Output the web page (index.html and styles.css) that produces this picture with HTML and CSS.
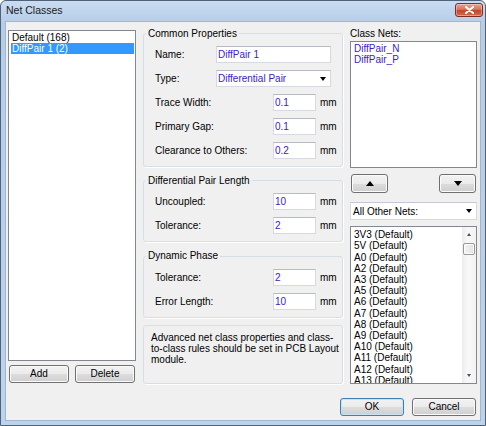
FILE: index.html
```html
<!DOCTYPE html>
<html>
<head>
<meta charset="utf-8">
<title>Net Classes</title>
<link rel="stylesheet" href="styles.css">
</head>
<body>
<div class="window">
  <div class="titlebar">
    <span class="title">Net Classes</span>
    <div class="close"><svg width="11" height="8" viewBox="0 0 11 8"><path d="M2 1 L9 7 M9 1 L2 7" stroke="#fff" stroke-width="2" stroke-linecap="round"/></svg></div>
  </div>
  <div class="client">
    <div class="main">
      <div class="col-left">
        <div class="listbox classes">
          <div class="item">Default (168)</div>
          <div class="item selected">DiffPair 1 (2)</div>
        </div>
        <div class="btn-row">
          <button class="btn">Add</button>
          <button class="btn">Delete</button>
        </div>
      </div>

      <div class="col-mid">
        <fieldset class="group">
          <legend>Common Properties</legend>
          <div class="rows">
            <div class="row"><span class="label short">Name:</span><input class="field wide" value="DiffPair 1"></div>
            <div class="row"><span class="label short">Type:</span><div class="field wide combo"><span>Differential Pair</span><i class="arrow-down"></i></div></div>
            <div class="row"><span class="label">Trace Width:</span><input class="field num" value="0.1"><span class="unit">mm</span></div>
            <div class="row"><span class="label">Primary Gap:</span><input class="field num" value="0.1"><span class="unit">mm</span></div>
            <div class="row"><span class="label">Clearance to Others:</span><input class="field num" value="0.2"><span class="unit">mm</span></div>
          </div>
        </fieldset>
        <fieldset class="group spaced">
          <legend>Differential Pair Length</legend>
          <div class="rows">
            <div class="row"><span class="label">Uncoupled:</span><input class="field num" value="10"><span class="unit">mm</span></div>
            <div class="row"><span class="label">Tolerance:</span><input class="field num" value="2"><span class="unit">mm</span></div>
          </div>
        </fieldset>
        <fieldset class="group spaced">
          <legend>Dynamic Phase</legend>
          <div class="rows">
            <div class="row"><span class="label">Tolerance:</span><input class="field num" value="2"><span class="unit">mm</span></div>
            <div class="row"><span class="label">Error Length:</span><input class="field num" value="10"><span class="unit">mm</span></div>
          </div>
        </fieldset>
        <div class="info">Advanced net class properties and class-<br>to-class rules should be set in PCB Layout<br>module.</div>
      </div>

      <div class="col-right">
        <div class="caption">Class Nets:</div>
        <div class="listbox classnets">
          <div class="item blue">DiffPair_N</div>
          <div class="item blue">DiffPair_P</div>
        </div>
        <div class="arrows">
          <button class="btn arrow-btn"><i class="tri-up"></i></button>
          <button class="btn arrow-btn"><i class="tri-down"></i></button>
        </div>
        <div class="select"><span>All Other Nets:</span><i class="arrow-down"></i></div>
        <div class="listbox nets">
          <div class="net-items">
            <div class="item">3V3 (Default)</div>
            <div class="item">5V (Default)</div>
            <div class="item">A0 (Default)</div>
            <div class="item">A2 (Default)</div>
            <div class="item">A3 (Default)</div>
            <div class="item">A5 (Default)</div>
            <div class="item">A6 (Default)</div>
            <div class="item">A7 (Default)</div>
            <div class="item">A8 (Default)</div>
            <div class="item">A9 (Default)</div>
            <div class="item">A10 (Default)</div>
            <div class="item">A11 (Default)</div>
            <div class="item">A12 (Default)</div>
            <div class="item">A13 (Default)</div>
          </div>
          <div class="scrollbar">
            <div class="sb-btn"><i class="sb-up"></i></div>
            <div class="sb-track"><div class="sb-thumb"></div></div>
            <div class="sb-btn"><i class="sb-down"></i></div>
          </div>
        </div>
      </div>
    </div>
    <div class="footer">
      <button class="btn default">OK</button>
      <button class="btn">Cancel</button>
    </div>
  </div>
</div>
</body>
</html>
```

FILE: styles.css
```css
* { box-sizing: border-box; }
html, body { margin: 0; padding: 0; }
body {
  font-family: "Liberation Sans", Arial, sans-serif;
  font-size: 10px;
  line-height: 11.2px;
  color: #000;
  background: #fff;
}

.window {
  width: 486px;
  height: 426px;
  border: 1px solid #4f627a;
  border-radius: 6px 6px 0 0;
  background: linear-gradient(#c9dcf1, #b6cde8 22px, #bdd3eb);
  display: flex;
  flex-direction: column;
  overflow: hidden;
}

.titlebar {
  height: 20px;
  flex: none;
  display: flex;
  align-items: center;
  padding: 0 2px 0 5px;
}
.title { color: #1b1b1b; font-size: 10.5px; }
.close {
  margin-left: auto;
  align-self: flex-start;
  margin-top: 2px;
  width: 28px;
  height: 14px;
  border: 1px solid #7d2e22;
  border-radius: 3px;
  background: linear-gradient(#eaa493, #d6745e 45%, #c2452d 55%, #d0704f);
  box-shadow: inset 0 0 0 1px rgba(255, 255, 255, 0.35);
  display: flex;
  align-items: center;
  justify-content: center;
}

.client {
  flex: 1;
  margin: 0 4px 4px;
  border: 1px solid #a3b6cb;
  background: #f0f0f0;
  display: flex;
  flex-direction: column;
  padding: 6px 3px 4px 2px;
  min-height: 0;
}
.main {
  flex: 1;
  min-height: 0;
  display: grid;
  grid-template-columns: 128px 200px 127px;
  column-gap: 7px;
}

/* list boxes */
.listbox {
  background: #fff;
  border: 1px solid #828790;
  overflow: hidden;
}
.item { padding-left: 1px; white-space: nowrap; }
.item.selected { background: #3399ff; color: #fff; }
.blue { color: #3a22c8; }

/* left column */
.col-left {
  display: flex;
  flex-direction: column;
  gap: 4px;
  padding: 2px 0 1px;
  min-height: 0;
}
.classes { flex: 1; padding: 1px 1px 1px 2px; }
.btn-row { display: flex; gap: 6px; padding-left: 1px; height: 18px; }
.btn-row .btn { width: 60px; }

/* buttons */
.btn {
  font: inherit;
  color: #000;
  height: 18px;
  padding: 0;
  border: 1px solid #707070;
  border-radius: 3px;
  background: linear-gradient(#f2f2f2, #ebebeb 50%, #dddddd 50%, #cfcfcf);
  box-shadow: inset 0 0 0 1px #fbfbfb;
}
.btn.default {
  border-color: #3c7fb1;
  box-shadow: inset 0 0 0 1px #c6e4f5;
}

/* middle column */
.col-mid { display: flex; flex-direction: column; min-height: 0; }
.group {
  margin: 0;
  border: 1px solid #d5dfe5;
  border-radius: 3px;
  padding: 7px 4px 7px 11px;
  min-width: 0;
  box-shadow: 1px 1px 0 #fff;
}
.group.spaced { margin-top: 8px; }
.group legend {
  padding: 0 2px;
  margin-left: -9px;
  line-height: 11.2px;
}
.rows { display: flex; flex-direction: column; gap: 7px; }
.row { display: flex; align-items: center; height: 17px; }
.label { flex: 1; white-space: nowrap; }
.label.short { flex: none; width: 61px; }
.field {
  height: 17px;
  border: 1px solid #d6dae0;
  border-top-color: #b7bbc2;
  background: #fff;
  color: #3a22c8;
  font: inherit;
  padding: 0 0 0 1px;
  margin: 0;
  outline: none;
}
.wide { width: 115px; }
.num { width: 43px; }
.unit { width: 18px; margin-left: 4px; }
.combo {
  display: flex;
  align-items: center;
  justify-content: space-between;
  padding-right: 4px;
}
.arrow-down {
  width: 0;
  height: 0;
  border-left: 3.5px solid transparent;
  border-right: 3.5px solid transparent;
  border-top: 4px solid #000;
}
.info {
  margin-top: 7px;
  flex: 1;
  border: 1px solid #d5dfe5;
  border-radius: 3px;
  padding: 6px 6px 0 7px;
  white-space: nowrap;
  box-shadow: 1px 1px 0 #fff;
}

/* right column */
.col-right { display: flex; flex-direction: column; min-height: 0; }
.caption { height: 11.2px; }
.classnets { margin-top: 2px; height: 127px; padding: 1px 1px 1px 2px; }
.arrows {
  display: flex;
  justify-content: space-between;
  padding: 0 1px;
  margin-top: 6px;
}
.arrow-btn {
  width: 37px;
  height: 19px;
  display: flex;
  align-items: center;
  justify-content: center;
}
.tri-up {
  width: 0; height: 0;
  border-left: 4.5px solid transparent;
  border-right: 4.5px solid transparent;
  border-bottom: 5px solid #000;
}
.tri-down {
  width: 0; height: 0;
  border-left: 4.5px solid transparent;
  border-right: 4.5px solid transparent;
  border-top: 5px solid #000;
}
.select {
  margin-top: 9px;
  height: 18px;
  background: #fff;
  border: 1px solid #d6dae0;
  border-top-color: #c5c9cf;
  display: flex;
  align-items: center;
  justify-content: space-between;
  padding: 0 4px 0 2px;
}
.nets {
  margin-top: 6px;
  flex: 1;
  min-height: 0;
  display: flex;
}
.net-items { flex: 1; overflow: hidden; padding: 2px 0 0 2px; min-width: 0; }
.scrollbar {
  width: 14px;
  display: flex;
  flex-direction: column;
  background: linear-gradient(90deg, #ececec, #f8f8f8 40%, #f2f2f2);
}
.sb-btn {
  height: 15px;
  display: flex;
  align-items: center;
  justify-content: center;
}
.sb-up {
  width: 0; height: 0;
  border-left: 2.5px solid transparent;
  border-right: 2.5px solid transparent;
  border-bottom: 3px solid #505050;
}
.sb-down {
  width: 0; height: 0;
  border-left: 2.5px solid transparent;
  border-right: 2.5px solid transparent;
  border-top: 3px solid #505050;
}
.sb-track { flex: 1; padding: 1px 1px 0; }
.sb-thumb {
  height: 12px;
  border: 1px solid #979797;
  border-radius: 2px;
  background: linear-gradient(90deg, #f3f3f3, #e2e2e2);
  box-shadow: inset 0 0 0 1px #fff;
}

/* footer */
.footer {
  flex: none;
  display: flex;
  justify-content: flex-end;
  gap: 8px;
  margin-top: 14px;
  padding-right: 1px;
}
.footer .btn { width: 64px; }
```
